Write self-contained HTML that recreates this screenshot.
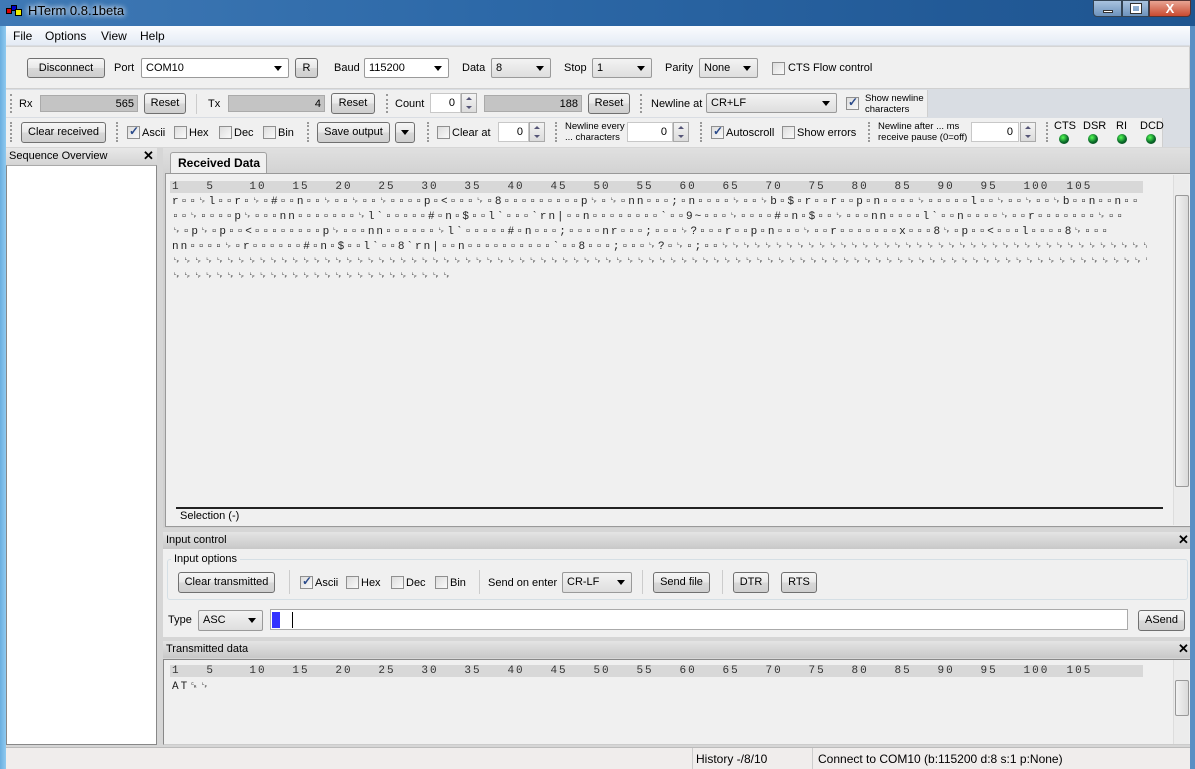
<!DOCTYPE html>
<html><head><meta charset="utf-8">
<style>
*{box-sizing:border-box;margin:0;padding:0}
body{width:1195px;height:769px;overflow:hidden;position:relative;background:#d9dde3;font-family:"Liberation Sans",sans-serif;font-size:11px;color:#000}
.a{position:absolute}
.t{position:absolute;white-space:nowrap;line-height:14px}
.btn{position:absolute;border:1px solid #707070;border-radius:3px;background:linear-gradient(#f6f6f6,#e8e8e8 50%,#d8d8d8 51%,#cfcfcf);text-align:center;line-height:18px;white-space:nowrap}
.cb{position:absolute;width:13px;height:13px;border:1px solid #8f8f8f;background:linear-gradient(135deg,#dcdcdc,#fafafa)}
.cb.on::after{content:"✓";position:absolute;left:1px;top:-3px;font-size:12px;color:#2a4a8a;font-weight:bold}
.combo{position:absolute;border:1px solid #9a9a9a;border-radius:2px;background:#fff;padding-left:4px;line-height:18px;height:20px}
.combo.g{background:linear-gradient(#f3f3f3,#dedede)}
.combo::after{content:"";position:absolute;right:6px;top:7px;border-left:4px solid transparent;border-right:4px solid transparent;border-top:5px solid #000}
.fld{position:absolute;background:#c4c4c4;border:1px solid #aaa;text-align:right;padding-right:3px;line-height:16px}
.inp{position:absolute;background:#fff;border:1px solid #c8c8c8;text-align:right;padding-right:5px;line-height:18px;height:20px}
.spin{position:absolute;width:16px;height:20px;border:1px solid #aaa;background:linear-gradient(#f4f4f4,#dcdcdc)}
.spin::before{content:"";position:absolute;left:4px;top:3px;border-left:3px solid transparent;border-right:3px solid transparent;border-bottom:3px solid #557}
.spin::after{content:"";position:absolute;left:4px;top:12px;border-left:3px solid transparent;border-right:3px solid transparent;border-top:3px solid #557}
.grip{position:absolute;width:2px;border-left:2px dotted #999}
.band{position:absolute;background:#f0f0f0;border-right:1px solid #cfcfcf}
.mono{font-family:"Liberation Mono","DejaVu Sans Mono",monospace;font-size:11px;letter-spacing:2.0px;white-space:pre;position:absolute;line-height:15px;color:#222;overflow:hidden}
.ruler{position:absolute;background:#d8d8d8;font-family:"Liberation Mono","DejaVu Sans Mono",monospace;font-size:11px;letter-spacing:2.0px;white-space:pre;line-height:12px;color:#333;padding-left:2px}
.hdr{position:absolute;background:linear-gradient(#e4e4e4,#c8c8c8);line-height:16px;padding-left:3px}
.x{position:absolute;font-weight:bold;font-size:13px}
.sb{position:absolute;width:16px;background:#ececec;border-left:1px solid #ddd}
.led{position:absolute;width:10px;height:10px;border-radius:50%;background:radial-gradient(circle at 40% 35%,#5f5,#0a6a2a 55%,#031);}
</style></head><body>
<div class="a" style="left:0;top:0;width:1195px;height:26px;background:linear-gradient(90deg,#3f79b5,#2d69a8 40%,#225a97 80%,#1f5590)"></div>
<div class="a" style="left:0;top:26px;width:6px;height:743px;background:linear-gradient(90deg,#6aaedf,#8fcaf0)"></div>
<div class="a" style="left:1190px;top:26px;width:5px;height:743px;background:#5a8fc4"></div>
<div class="a" style="left:6px;top:8px;width:6px;height:6px;background:#d00;border:1px solid #000"></div>
<div class="a" style="left:11px;top:5px;width:6px;height:6px;background:#00c;border:1px solid #000"></div>
<div class="a" style="left:15px;top:9px;width:7px;height:7px;background:#ee0;border:1px solid #000"></div>
<div class="t" style="left:28px;top:4px;font-size:13px;color:#000;text-shadow:0 0 6px #fff,0 0 6px #fff">HTerm 0.8.1beta</div>
<div class="a" style="left:1093px;top:0;width:29px;height:17px;border:1px solid #345;border-radius:0 0 0 4px;background:linear-gradient(#a9c3df,#6d93bd)"><div class="a" style="left:9px;top:9px;width:10px;height:3px;background:#fff;border:1px solid #333"></div></div>
<div class="a" style="left:1122px;top:0;width:27px;height:17px;border:1px solid #345;background:linear-gradient(#a9c3df,#6d93bd)"><div class="a" style="left:8px;top:3px;width:10px;height:9px;border:2px solid #fff;outline:1px solid #333"></div></div>
<div class="a" style="left:1149px;top:0;width:42px;height:17px;border:1px solid #533;border-radius:0 0 4px 0;background:linear-gradient(#e8a493,#c94a30);color:#fff;font-weight:bold;text-align:center;line-height:15px;font-size:13px">X</div>
<div class="a" style="left:6px;top:26px;width:1184px;height:19px;background:linear-gradient(#fbfcfe,#e4ebf5)"></div>
<div class="t" style="left:13px;top:29px;font-size:12px">File</div>
<div class="t" style="left:45px;top:29px;font-size:12px">Options</div>
<div class="t" style="left:101px;top:29px;font-size:12px">View</div>
<div class="t" style="left:140px;top:29px;font-size:12px">Help</div>
<div class="band" style="left:6px;top:46px;width:1184px;height:43px;border-top:1px solid #d5d5d5;border-bottom:1px solid #d0d0d0"></div>
<div class="btn" style="left:27px;top:58px;width:78px;height:20px">Disconnect</div>
<div class="t" style="left:114px;top:61px">Port</div>
<div class="combo" style="left:141px;top:58px;width:148px">COM10</div>
<div class="btn" style="left:295px;top:58px;width:23px;height:20px">R</div>
<div class="t" style="left:334px;top:61px">Baud</div>
<div class="combo" style="left:364px;top:58px;width:85px">115200</div>
<div class="t" style="left:462px;top:61px">Data</div>
<div class="combo g" style="left:491px;top:58px;width:60px">8</div>
<div class="t" style="left:564px;top:61px">Stop</div>
<div class="combo g" style="left:592px;top:58px;width:60px">1</div>
<div class="t" style="left:665px;top:61px">Parity</div>
<div class="combo g" style="left:699px;top:58px;width:59px">None</div>
<div class="cb" style="left:772px;top:62px"></div>
<div class="t" style="left:788px;top:61px">CTS Flow control</div>
<div class="band" style="left:6px;top:90px;width:922px;height:27px"></div>
<div class="grip" style="left:10px;top:94px;height:19px"></div>
<div class="t" style="left:19px;top:97px">Rx</div>
<div class="fld" style="left:40px;top:95px;width:98px;height:17px">565</div>
<div class="btn" style="left:144px;top:93px;width:42px;height:21px">Reset</div>
<div class="a" style="left:196px;top:94px;width:1px;height:20px;background:#ccc"></div>
<div class="t" style="left:208px;top:97px">Tx</div>
<div class="fld" style="left:228px;top:95px;width:97px;height:17px">4</div>
<div class="btn" style="left:331px;top:93px;width:44px;height:21px">Reset</div>
<div class="grip" style="left:386px;top:94px;height:19px"></div>
<div class="t" style="left:395px;top:97px">Count</div>
<div class="inp" style="left:430px;top:93px;width:31px">0</div>
<div class="spin" style="left:461px;top:93px"></div>
<div class="fld" style="left:484px;top:95px;width:98px;height:17px">188</div>
<div class="btn" style="left:588px;top:93px;width:42px;height:21px">Reset</div>
<div class="grip" style="left:640px;top:94px;height:19px"></div>
<div class="t" style="left:651px;top:97px">Newline at</div>
<div class="combo g" style="left:706px;top:93px;width:131px">CR+LF</div>
<div class="cb on" style="left:846px;top:97px"></div>
<div class="t" style="left:865px;top:93px;font-size:9.5px;line-height:11px">Show newline<br>characters</div>
<div class="band" style="left:6px;top:118px;width:1157px;height:29px"></div>
<div class="grip" style="left:10px;top:122px;height:20px"></div>
<div class="btn" style="left:21px;top:122px;width:85px;height:21px">Clear received</div>
<div class="grip" style="left:116px;top:122px;height:20px"></div>
<div class="cb on" style="left:127px;top:126px"></div><div class="t" style="left:142px;top:126px">Ascii</div>
<div class="cb" style="left:174px;top:126px"></div><div class="t" style="left:189px;top:126px">Hex</div>
<div class="cb" style="left:219px;top:126px"></div><div class="t" style="left:234px;top:126px">Dec</div>
<div class="cb" style="left:263px;top:126px"></div><div class="t" style="left:278px;top:126px">Bin</div>
<div class="grip" style="left:307px;top:122px;height:20px"></div>
<div class="btn" style="left:317px;top:122px;width:73px;height:21px">Save output</div>
<div class="btn" style="left:395px;top:122px;width:20px;height:21px"><div class="a" style="left:5px;top:7px;border-left:4px solid transparent;border-right:4px solid transparent;border-top:5px solid #000"></div></div>
<div class="grip" style="left:427px;top:122px;height:20px"></div>
<div class="cb" style="left:437px;top:126px"></div><div class="t" style="left:452px;top:126px">Clear at</div>
<div class="inp" style="left:498px;top:122px;width:31px">0</div>
<div class="spin" style="left:529px;top:122px"></div>
<div class="grip" style="left:555px;top:122px;height:20px"></div>
<div class="t" style="left:565px;top:121px;font-size:9.5px;line-height:11px">Newline every<br>... characters</div>
<div class="inp" style="left:627px;top:122px;width:46px">0</div>
<div class="spin" style="left:673px;top:122px"></div>
<div class="grip" style="left:700px;top:122px;height:20px"></div>
<div class="cb on" style="left:711px;top:126px"></div><div class="t" style="left:726px;top:126px">Autoscroll</div>
<div class="cb" style="left:782px;top:126px"></div><div class="t" style="left:797px;top:126px">Show errors</div>
<div class="grip" style="left:868px;top:122px;height:20px"></div>
<div class="t" style="left:878px;top:121px;font-size:9.5px;line-height:11px">Newline after ... ms<br>receive pause (0=off)</div>
<div class="inp" style="left:971px;top:122px;width:48px">0</div>
<div class="spin" style="left:1020px;top:122px"></div>
<div class="grip" style="left:1046px;top:122px;height:20px"></div>
<div class="t" style="left:1054px;top:119px">CTS</div><div class="led" style="left:1059px;top:134px"></div>
<div class="t" style="left:1083px;top:119px">DSR</div><div class="led" style="left:1088px;top:134px"></div>
<div class="t" style="left:1116px;top:119px">RI</div><div class="led" style="left:1117px;top:134px"></div>
<div class="t" style="left:1140px;top:119px">DCD</div><div class="led" style="left:1146px;top:134px"></div>
<div class="a" style="left:6px;top:147px;width:1184px;height:600px;background:#d6d6d6"></div>
<div class="hdr" style="left:6px;top:148px;width:151px;height:17px;background:linear-gradient(#e8e8e8,#d4d4d4)">Sequence Overview</div>
<div class="x" style="left:143px;top:148px">✕</div>
<div class="a" style="left:6px;top:165px;width:151px;height:580px;background:#fff;border:1px solid #888;border-top:1px solid #aaa"></div>
<div class="a" style="left:163px;top:148px;width:1027px;height:380px;background:linear-gradient(#e0e0e0,#d0d0d0 30px)"></div>
<div class="a" style="left:170px;top:152px;width:97px;height:22px;background:#f0f0f0;border:1px solid #a0a0a0;border-bottom:none;border-radius:3px 3px 0 0;font-weight:bold;font-size:12px;line-height:20px;padding-left:7px">Received Data</div>
<div class="a" style="left:165px;top:173px;width:1025px;height:354px;background:#f0f0f0;border:1px solid #999;border-right:none"></div>
<div class="ruler" style="left:170px;top:181px;width:973px;height:12px">1   5    10   15   20   25   30   35   40   45   50   55   60   65   70   75   80   85   90   95   100  105</div>
<div class="mono" style="left:172px;top:195px;width:975px;height:95px">r▫▫␊l▫▫r▫␊▫#▫▫n▫▫␊▫▫␊▫▫␊▫▫▫▫p▫&lt;▫▫▫␊▫8▫▫▫▫▫▫▫▫▫p␊▫␊▫nn▫▫▫;▫n▫▫▫▫␊▫▫␊b▫$▫r▫▫r▫▫p▫n▫▫▫▫␊▫▫▫▫▫l▫▫␊▫▫␊▫▫␊b▫▫n▫▫n▫▫
▫▫␊▫▫▫▫p␊▫▫▫nn▫▫▫▫▫▫▫␊l`▫▫▫▫▫#▫n▫$▫▫l`▫▫▫`rn|▫▫n▫▫▫▫▫▫▫▫`▫▫9~▫▫▫␊▫▫▫▫#▫n▫$▫▫␊▫▫▫nn▫▫▫▫l`▫▫n▫▫▫▫␊▫▫r▫▫▫▫▫▫▫␊▫▫
␊▫p␊▫p▫▫&lt;▫▫▫▫▫▫▫▫p␊▫▫▫nn▫▫▫▫▫▫␊l`▫▫▫▫▫#▫n▫▫▫;▫▫▫▫nr▫▫▫;▫▫▫␊?▫▫▫r▫▫p▫n▫▫▫␊▫▫r▫▫▫▫▫▫▫x▫▫▫8␊▫p▫▫&lt;▫▫▫l▫▫▫▫8␊▫▫▫
nn▫▫▫▫␊▫r▫▫▫▫▫▫#▫n▫$▫▫l`▫▫8`rn|▫▫n▫▫▫▫▫▫▫▫▫▫`▫▫8▫▫▫;▫▫▫␊?▫␊▫;▫▫␊␊␊␊␊␊␊␊␊␊␊␊␊␊␊␊␊␊␊␊␊␊␊␊␊␊␊␊␊␊␊␊␊␊␊␊␊␊␊␊␊␊␊␊␊␊␊␊␊␊␊␊␊␊␊␊␊␊
␊␊␊␊␊␊␊␊␊␊␊␊␊␊␊␊␊␊␊␊␊␊␊␊␊␊␊␊␊␊␊␊␊␊␊␊␊␊␊␊␊␊␊␊␊␊␊␊␊␊␊␊␊␊␊␊␊␊␊␊␊␊␊␊␊␊␊␊␊␊␊␊␊␊␊␊␊␊␊␊␊␊␊␊␊␊␊␊␊␊␊␊␊␊␊␊␊␊␊␊␊␊␊␊␊␊␊␊␊␊␊␊␊
␊␊␊␊␊␊␊␊␊␊␊␊␊␊␊␊␊␊␊␊␊␊␊␊␊␊</div>
<div class="sb" style="left:1173px;top:175px;height:350px"><div class="a" style="left:1px;top:20px;width:14px;height:292px;border:1px solid #999;border-radius:2px;background:linear-gradient(90deg,#f2f2f2,#dadada)"></div></div>
<div class="a" style="left:176px;top:507px;width:987px;height:2px;background:#222"></div>
<div class="t" style="left:180px;top:509px">Selection (-)</div>
<div class="hdr" style="left:163px;top:532px;width:1027px;height:17px">Input control</div>
<div class="x" style="left:1178px;top:532px">✕</div>
<div class="a" style="left:163px;top:549px;width:1027px;height:88px;background:#f0f0f0"></div>
<div class="a" style="left:167px;top:559px;width:1021px;height:41px;border:1px solid #d5dfe5;border-radius:3px"></div>
<div class="t" style="left:171px;top:552px;background:#f0f0f0;padding:0 3px">Input options</div>
<div class="btn" style="left:178px;top:572px;width:97px;height:21px">Clear transmitted</div>
<div class="a" style="left:289px;top:570px;width:1px;height:24px;background:#ccc"></div>
<div class="cb on" style="left:300px;top:576px"></div><div class="t" style="left:315px;top:576px">Ascii</div>
<div class="cb" style="left:346px;top:576px"></div><div class="t" style="left:361px;top:576px">Hex</div>
<div class="cb" style="left:391px;top:576px"></div><div class="t" style="left:406px;top:576px">Dec</div>
<div class="cb" style="left:435px;top:576px"></div><div class="t" style="left:450px;top:576px">Bin</div>
<div class="a" style="left:479px;top:570px;width:1px;height:24px;background:#ccc"></div>
<div class="t" style="left:488px;top:576px">Send on enter</div>
<div class="combo g" style="left:562px;top:572px;width:70px;height:21px">CR-LF</div>
<div class="a" style="left:642px;top:570px;width:1px;height:24px;background:#ccc"></div>
<div class="btn" style="left:653px;top:572px;width:57px;height:21px">Send file</div>
<div class="a" style="left:722px;top:570px;width:1px;height:24px;background:#ccc"></div>
<div class="btn" style="left:733px;top:572px;width:36px;height:21px">DTR</div>
<div class="btn" style="left:781px;top:572px;width:36px;height:21px">RTS</div>
<div class="t" style="left:168px;top:613px">Type</div>
<div class="combo g" style="left:198px;top:610px;width:65px;height:21px">ASC</div>
<div class="a" style="left:270px;top:609px;width:858px;height:21px;background:#fff;border:1px solid #aaa"><div class="a" style="left:1px;top:2px;width:8px;height:16px;background:#33f"></div><div class="a" style="left:21px;top:2px;width:1px;height:16px;background:#000"></div></div>
<div class="btn" style="left:1138px;top:610px;width:47px;height:21px">ASend</div>
<div class="hdr" style="left:163px;top:641px;width:1027px;height:17px">Transmitted data</div>
<div class="x" style="left:1178px;top:641px">✕</div>
<div class="a" style="left:163px;top:659px;width:1027px;height:86px;background:#f0f0f0;border:1px solid #888;border-right:none;border-bottom:1px solid #ccc"></div>
<div class="ruler" style="left:170px;top:665px;width:973px;height:12px">1   5    10   15   20   25   30   35   40   45   50   55   60   65   70   75   80   85   90   95   100  105</div>
<div class="mono" style="left:172px;top:680px">AT␍␊</div>
<div class="sb" style="left:1173px;top:660px;height:84px"><div class="a" style="left:1px;top:20px;width:14px;height:36px;border:1px solid #999;border-radius:2px;background:linear-gradient(90deg,#f2f2f2,#dadada)"></div></div>
<div class="a" style="left:6px;top:747px;width:1184px;height:22px;background:#f0edec;border-top:1px solid #bbb"></div>
<div class="a" style="left:692px;top:748px;width:1px;height:21px;background:#ccc"></div>
<div class="a" style="left:812px;top:748px;width:1px;height:21px;background:#ccc"></div>
<div class="t" style="left:696px;top:752px;font-size:12px">History -/8/10</div>
<div class="t" style="left:818px;top:752px;font-size:12px">Connect to COM10 (b:115200 d:8 s:1 p:None)</div>
</body></html>
